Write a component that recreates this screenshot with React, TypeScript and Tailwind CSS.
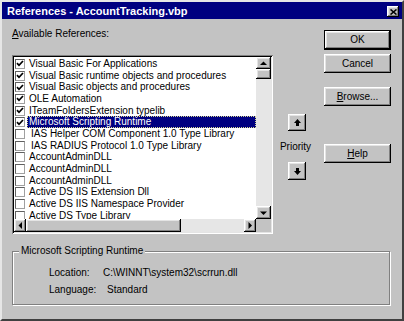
import React from "react";

const raised =
  "bg-[#c3c3c3] shadow-[inset_-1px_-1px_0_#000,inset_1px_1px_0_#fff,inset_-2px_-2px_0_#808080,inset_2px_2px_0_#e4e4e4]";

const refs = [
  { name: "Visual Basic For Applications", on: true },
  { name: "Visual Basic runtime objects and procedures", on: true },
  { name: "Visual Basic objects and procedures", on: true },
  { name: "OLE Automation", on: true },
  { name: "ITeamFoldersExtension typelib", on: true },
  { name: "Microsoft Scripting Runtime", on: true, sel: true },
  { name: "IAS Helper COM Component 1.0 Type Library", pad: true },
  { name: "IAS RADIUS Protocol 1.0 Type Library", pad: true },
  { name: "AccountAdminDLL" },
  { name: "AccountAdminDLL" },
  { name: "AccountAdminDLL" },
  { name: "Active DS IIS Extension Dll" },
  { name: "Active DS IIS Namespace Provider" },
  { name: "Active DS Type Library" },
];

function Tri({ dir }: { dir: "up" | "down" | "left" | "right" }) {
  const pts = {
    up: "0,4 7,4 3.5,0.5",
    down: "0,0.5 7,0.5 3.5,4",
    left: "4,0 4,7 0.5,3.5",
    right: "0.5,0 0.5,7 4,3.5",
  }[dir];
  const w = dir === "up" || dir === "down" ? 7 : 4;
  const h = dir === "up" || dir === "down" ? 4 : 7;
  return (
    <svg width={w} height={h} viewBox={`0 0 ${w} ${h}`}>
      <polygon points={pts} fill="#000" />
    </svg>
  );
}

function Arrow({ up }: { up?: boolean }) {
  return (
    <svg width="7" height="7" viewBox="0 0 7 7">
      {up ? (
        <>
          <polygon points="0,4 7,4 3.5,0" fill="#000" />
          <rect x="2" y="4" width="3" height="3" fill="#000" />
        </>
      ) : (
        <>
          <polygon points="0,3 7,3 3.5,7" fill="#000" />
          <rect x="2" y="0" width="3" height="3" fill="#000" />
        </>
      )}
    </svg>
  );
}

function Btn({ children, def }: { children: React.ReactNode; def?: boolean }) {
  if (def) {
    return (
      <div className="h-[20px] w-[67px] border border-black">
        <div className={`${raised} h-full w-full flex items-center justify-center`}>{children}</div>
      </div>
    );
  }
  return <div className={`${raised} h-[19px] w-[67px] flex items-center justify-center`}>{children}</div>;
}

export default function App() {
  return (
    <div className="w-[404px] h-[321px] bg-[#c3c3c3] flex flex-col border-2 border-t-[#e6e6e6] border-l-[#e6e6e6] border-r-[#404040] border-b-[#404040] font-['Liberation_Sans',Arial,sans-serif] text-[10px] leading-[12px] text-black">
      {/* title */}
      <div className="h-[17px] bg-[#000080] flex items-center justify-between pl-[5px] pr-[3px]">
        <span className="text-white font-bold text-[11px]">References - AccountTracking.vbp</span>
        <div className={`${raised} w-[12px] h-[11px] mt-[2px] flex items-center justify-center`}>
          <svg width="7" height="6" viewBox="0 0 7 6">
            <path d="M0.5 0.5 L6.5 5.5 M6.5 0.5 L0.5 5.5" stroke="#000" strokeWidth="1.6" />
          </svg>
        </div>
      </div>

      {/* top area */}
      <div className="flex pl-[10px]">
        <div className="w-[261px] flex flex-col pt-[9px]">
          <div>
            <span className="underline">A</span>vailable References:
          </div>
          <div className="mt-[15px] h-[179px] bg-white p-[2px] shadow-[inset_1px_1px_0_#808080,inset_-1px_-1px_0_#fff,inset_2px_2px_0_#000,inset_-2px_-2px_0_#e4e4e4] grid grid-cols-[1fr_15px] grid-rows-[1fr_13px]">
            <div className="overflow-hidden pt-[1px]">
              {refs.map((r, i) => (
                <div key={i} className="h-[11.7px] flex items-center whitespace-nowrap">
                  <div className="ml-[1px] w-[10px] h-[10px] shrink-0 bg-white border border-t-[#606060] border-l-[#606060] border-r-[#a0a0a0] border-b-[#a0a0a0] flex items-center justify-center">
                    {r.on && (
                      <svg width="8" height="7" viewBox="0 0 8 7">
                        <polyline points="1,3.2 3,5.3 7,1" fill="none" stroke="#000" strokeWidth="1.7" />
                      </svg>
                    )}
                  </div>
                  <div
                    className={
                      r.sel
                        ? "ml-[2px] flex-1 h-full flex items-center pl-[1px] bg-[#000080] text-white border border-dotted border-[#d8d890]"
                        : `ml-[3px] flex-1 ${r.pad ? "pl-[3px]" : "pl-[1px]"}`
                    }
                  >
                    {r.name}
                  </div>
                </div>
              ))}
            </div>
            {/* vertical scrollbar */}
            <div className="flex flex-col">
              <div className={`${raised} h-[12px] flex items-center justify-center`}>
                <Tri dir="up" />
              </div>
              <div className={`${raised} h-[10px]`} />
              <div className="flex-1 bg-[#e6e6e6]" />
              <div className={`${raised} h-[13px] flex items-center justify-center`}>
                <Tri dir="down" />
              </div>
            </div>
            {/* horizontal scrollbar */}
            <div className="flex">
              <div className={`${raised} w-[12px] flex items-center justify-center`}>
                <Tri dir="left" />
              </div>
              <div className={`${raised} w-[155px]`} />
              <div className="flex-1 bg-[#e6e6e6]" />
              <div className={`${raised} w-[12px] flex items-center justify-center`}>
                <Tri dir="right" />
              </div>
            </div>
            <div className="bg-[#c3c3c3]" />
          </div>
        </div>

        {/* priority */}
        <div className="w-[31px] ml-[7px] flex flex-col items-center pt-[95px]">
          <div className={`${raised} w-[18px] h-[17px] ml-[3px] flex items-center justify-center`}>
            <Arrow up />
          </div>
          <div className="mt-[10px]">Priority</div>
          <div className={`${raised} w-[18px] h-[18px] ml-[3px] mt-[9px] flex items-center justify-center`}>
            <Arrow />
          </div>
        </div>

        {/* buttons */}
        <div className="ml-[13px] flex flex-col pt-[11px]">
          <Btn def>OK</Btn>
          <div className="mt-[4px]">
            <Btn>Cancel</Btn>
          </div>
          <div className="mt-[14px]">
            <Btn>
              <span>
                <span className="underline">B</span>rowse...
              </span>
            </Btn>
          </div>
          <div className="mt-[38px]">
            <Btn>
              <span>
                <span className="underline">H</span>elp
              </span>
            </Btn>
          </div>
        </div>
      </div>

      {/* group box */}
      <div className="relative ml-[10px] mt-[17px] w-[378px] h-[54px] border border-[#808080] shadow-[1px_1px_0_#fff,inset_1px_1px_0_#fff]">
        <span className="absolute -top-[7px] left-[6px] px-[2px] bg-[#c3c3c3]">Microsoft Scripting Runtime</span>
        <div className="pt-[15px] pl-[36px] flex flex-col gap-[5px]">
          <div className="flex">
            <span className="w-[54px]">Location:</span>
            <span>C:\WINNT\system32\scrrun.dll</span>
          </div>
          <div className="flex">
            <span className="w-[58px]">Language:</span>
            <span>Standard</span>
          </div>
        </div>
      </div>
    </div>
  );
}
